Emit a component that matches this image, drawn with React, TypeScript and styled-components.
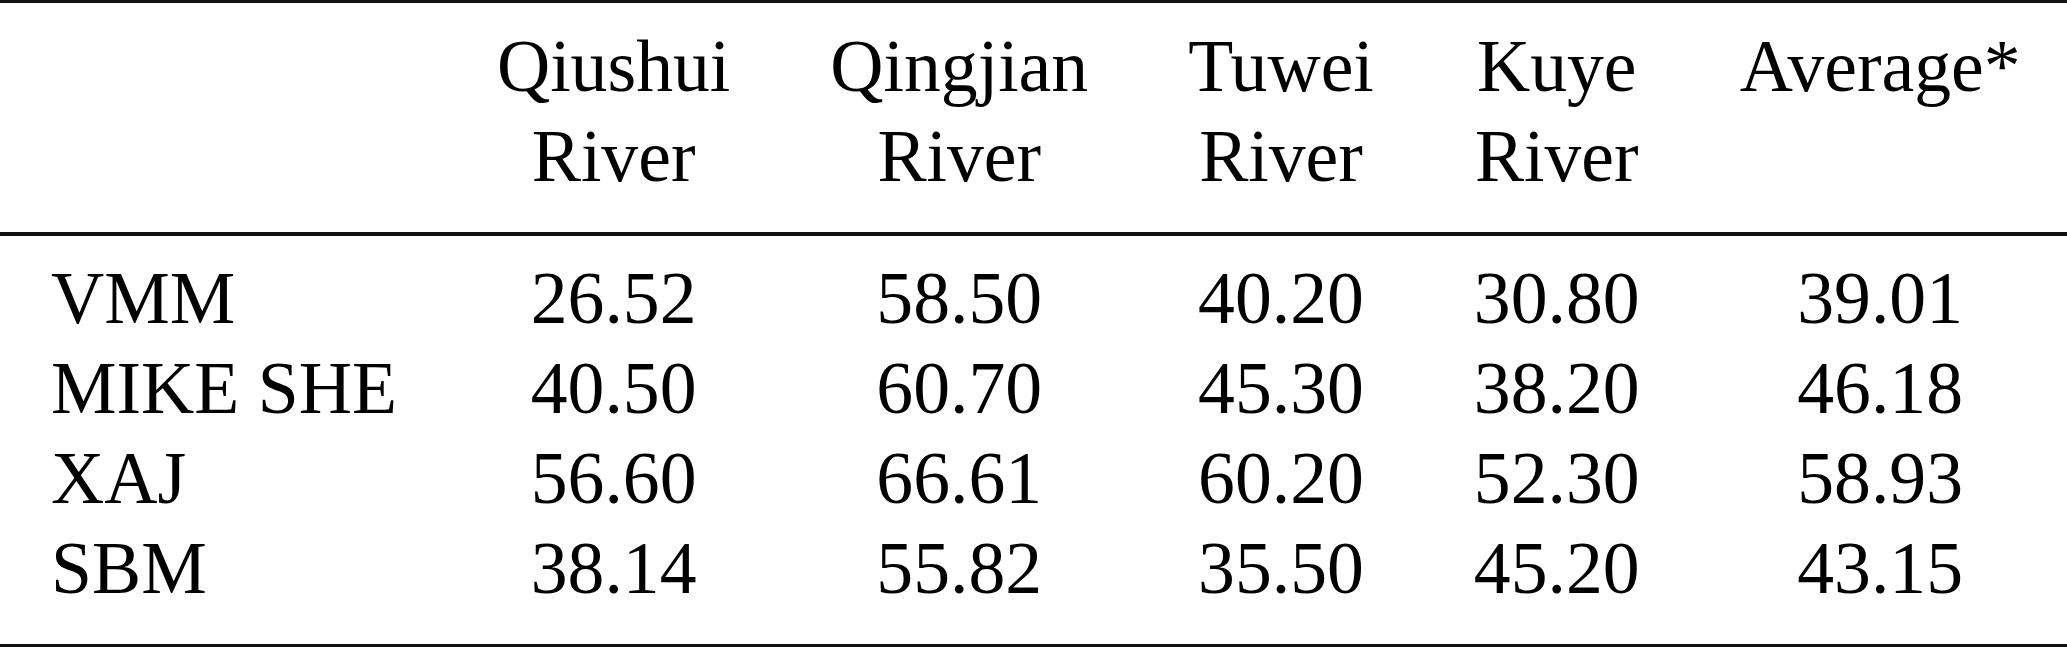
import React from "react";
import styled, { createGlobalStyle } from "styled-components";

const GlobalStyle = createGlobalStyle`
  html, body {
    margin: 0;
    padding: 0;
    background: #ffffff;
    overflow: hidden;
  }
`;

const Table = styled.table`
  width: 2067px;
  border-collapse: collapse;
  font-family: "Liberation Serif", "Times New Roman", serif;
  font-size: 73.7px;
  line-height: 90px;
  color: #000000;
`;

const Head = styled.thead`
  border-top: 3px solid #111111;
  border-bottom: 4px solid #111111;
`;

const Body = styled.tbody`
  border-bottom: 4px solid #111111;
`;

const HeadCell = styled.th<{ $first?: boolean }>`
  font-weight: normal;
  vertical-align: top;
  text-align: center;
  white-space: nowrap;
  padding: 18px 50px 31px;
  padding-left: ${(p) => (p.$first ? "51px" : "50px")};
`;

const Cell = styled.td<{ $label?: boolean; $top?: boolean; $bottom?: boolean }>`
  text-align: ${(p) => (p.$label ? "left" : "center")};
  white-space: nowrap;
  padding: 0 50px;
  padding-left: ${(p) => (p.$label ? "51px" : "50px")};
  padding-top: ${(p) => (p.$top ? "17px" : "0")};
  padding-bottom: ${(p) => (p.$bottom ? "31px" : "0")};
`;

const HeadLine = styled.span`
  display: block;
`;

const columns: string[][] = [
  ["Qiushui", "River"],
  ["Qingjian", "River"],
  ["Tuwei", "River"],
  ["Kuye", "River"],
  ["Average*"],
];

const rows: { model: string; values: string[] }[] = [
  { model: "VMM", values: ["26.52", "58.50", "40.20", "30.80", "39.01"] },
  { model: "MIKE SHE", values: ["40.50", "60.70", "45.30", "38.20", "46.18"] },
  { model: "XAJ", values: ["56.60", "66.61", "60.20", "52.30", "58.93"] },
  { model: "SBM", values: ["38.14", "55.82", "35.50", "45.20", "43.15"] },
];

export default function App() {
  return (
    <>
      <GlobalStyle />
      <Table>
        <Head>
          <tr>
            <HeadCell $first />
            {columns.map((lines, i) => (
              <HeadCell key={i}>
                {lines.map((l, j) => (
                  <HeadLine key={j}>{l}</HeadLine>
                ))}
              </HeadCell>
            ))}
          </tr>
        </Head>
        <Body>
          {rows.map((row, r) => {
            const top = r === 0;
            const bottom = r === rows.length - 1;
            return (
              <tr key={row.model}>
                <Cell $label $top={top} $bottom={bottom}>
                  {row.model}
                </Cell>
                {row.values.map((v, i) => (
                  <Cell key={i} $top={top} $bottom={bottom}>
                    {v}
                  </Cell>
                ))}
              </tr>
            );
          })}
        </Body>
      </Table>
    </>
  );
}
